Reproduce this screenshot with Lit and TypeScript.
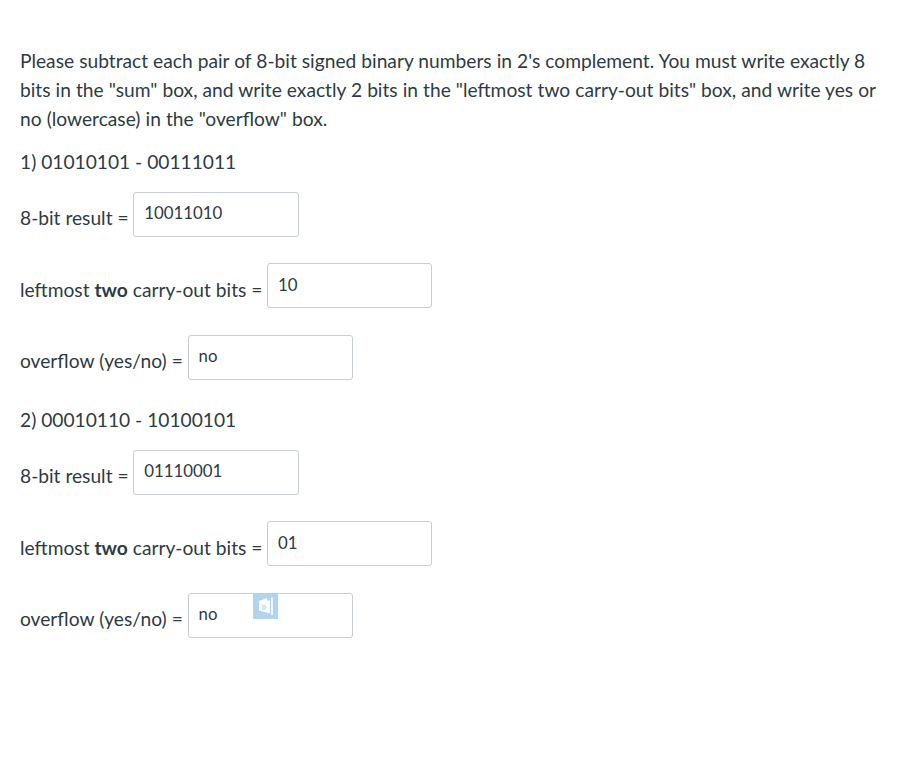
import { LitElement, html, css } from "lit";
import { customElement } from "lit/decorators.js";

const problems = [
  { title: "1) 01010101 - 00111011", sum: "10011010", carry: "10", over: "no", icon: false },
  { title: "2) 00010110 - 10100101", sum: "01110001", carry: "01", over: "no", icon: true },
];

@customElement("app-root")
export class AppRoot extends LitElement {
  static styles = css`
    :host {
      display: block;
      min-height: 757px;
      background: #fff;
      color: #2d3b45;
      font-family: Lato, "Liberation Sans", sans-serif;
      font-size: 19.2px;
      line-height: 28.8px;
      box-sizing: border-box;
      padding: 47px 20px 0;
    }
    p {
      margin: 0;
    }
    .intro {
      margin-bottom: 14.8px;
      word-spacing: 0.13px;
    }
    .problem {
      display: flex;
      flex-direction: column;
    }
    .title {
      margin-bottom: 15px;
    }
    .row {
      display: flex;
      align-items: flex-start;
      gap: 4.7px;
      height: 45px;
      margin-bottom: 26.4px;
    }
    .label {
      margin-top: 12.3px;
      white-space: nowrap;
    }
    .label.overflow {
      word-spacing: 0.3px;
    }
    .box {
      position: relative;
      box-sizing: border-box;
      width: 165.3px;
      height: 45px;
      border: 1px solid #c7cdd1;
      border-radius: 3px;
      background: #fff;
      padding: 6.5px 10px;
      font-size: 16.8px;
      line-height: 27px;
    }
    .badge {
      position: absolute;
      left: 64.5px;
      top: 0;
      width: 25px;
      height: 25px;
      background: #b1d4ef;
    }
    .badge svg {
      display: block;
    }
  `;

  private renderBadge() {
    return html`<div class="badge" aria-hidden="true">
      <svg width="25" height="25" viewBox="0 0 25 25">
        <path d="M6 7 L14 4 L14 6.5 L17 6.5 V19.5 L6 16.5 Z" fill="#fff" />
        <path d="M18 3.5 H20 V21 H18 Z" fill="#fff" opacity="0.8" />
        <path d="M9 10.5 V16 H11.5 L14 13.5 L11.5 10.5 Z" fill="#b1d4ef" opacity="0.55" />
      </svg>
    </div>`;
  }

  render() {
    return html`
      <p class="intro">
        Please subtract each pair of 8-bit signed binary numbers in 2's complement. You must write exactly 8 bits in the "sum" box, and write exactly 2 bits in the "leftmost two carry-out bits" box, and write yes or no (lowercase) in the "overflow" box.
      </p>
      ${problems.map(
        (p) => html`
          <section class="problem">
            <p class="title">${p.title}</p>
            <div class="row">
              <span class="label">8-bit result =</span>
              <div class="box" role="textbox">${p.sum}</div>
            </div>
            <div class="row">
              <span class="label">leftmost <b>two</b> carry-out bits =</span>
              <div class="box" role="textbox">${p.carry}</div>
            </div>
            <div class="row">
              <span class="label overflow">overflow (yes/no) =</span>
              <div class="box" role="textbox">${p.over}${p.icon ? this.renderBadge() : ""}</div>
            </div>
          </section>
        `
      )}
    `;
  }
}
